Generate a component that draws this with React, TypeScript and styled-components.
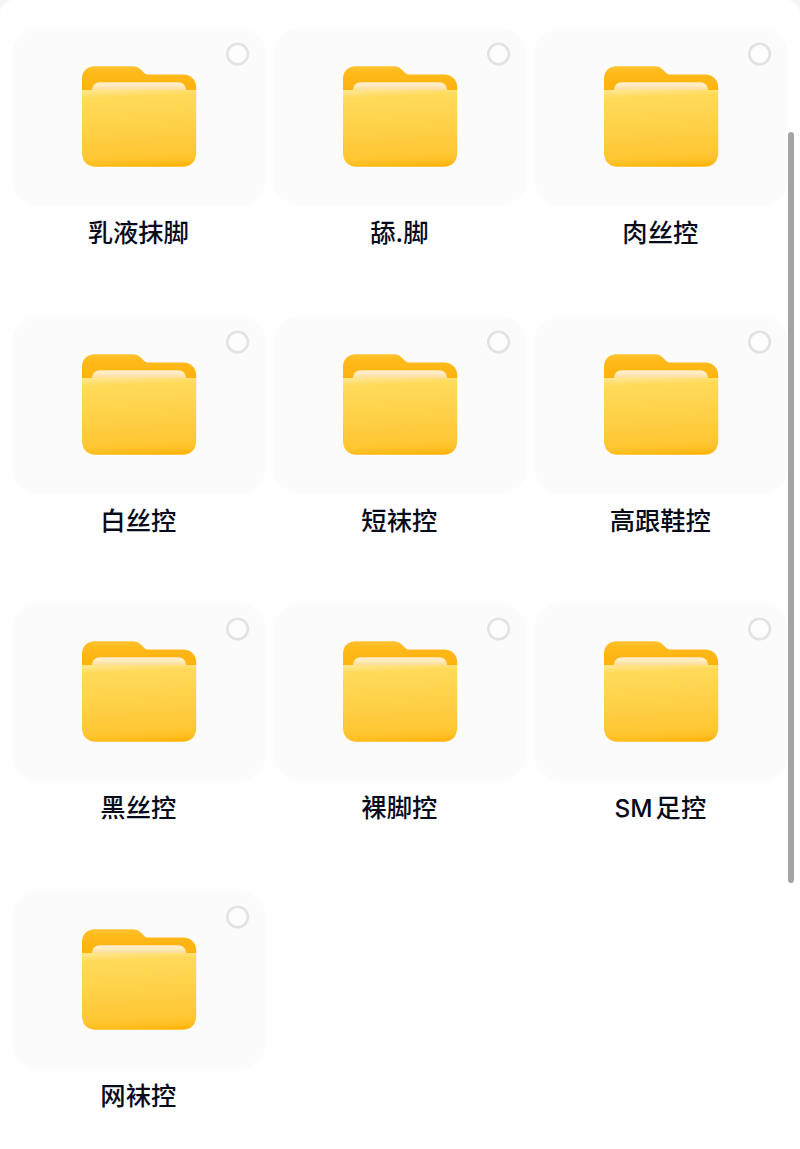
import React from "react";
import styled, { createGlobalStyle } from "styled-components";

const GlobalStyle = createGlobalStyle`
  * { box-sizing: border-box; }
  body { margin: 0; background: #f6f6f7; }
`;

const Sheet = styled.main`
  position: relative;
  width: 800px;
  height: 1149px;
  padding: 28px 12px 0;
  overflow: hidden;
  background: #fefefe;
  border-radius: 14px 14px 0 0;
  font-family: Inter, "Noto Sans CJK SC", sans-serif;
`;

const Grid = styled.div`
  display: grid;
  grid-template-columns: repeat(3, 254px);
  grid-auto-rows: 287.7px;
  column-gap: 7px;
`;

const Item = styled.div`
  display: flex;
  flex-direction: column;
  align-items: center;
`;

const Card = styled.div`
  position: relative;
  display: flex;
  justify-content: center;
  width: 100%;
  height: 178px;
  padding-top: 38px;
  border-radius: 27px;
  background: #fbfbfb;
`;

const Ring = styled.svg`
  position: absolute;
  top: 14px;
  right: 16px;
  width: 24px;
  height: 24px;
`;

const Name = styled.div`
  margin-top: 9px;
  padding-right: 1.4px;
  height: 36px;
  line-height: 36px;
  font-size: 25.3px;
  font-weight: 500;
  word-spacing: -3.6px;
  white-space: nowrap;
  color: #080c1a;
`;

const Latin = styled.span`
  font-size: 24.4px;
`;

const Scrollbar = styled.div`
  position: absolute;
  top: 132px;
  right: 6px;
  width: 6px;
  height: 751px;
  border-radius: 3px;
  background: #a4a4a4;
`;

const Defs = () => (
  <svg width="0" height="0" style={{ position: "absolute" }}>
    <defs>
      <linearGradient id="back" x1="0" y1="0" x2="0" y2="1">
        <stop offset="0" stopColor="#ffc433" />
        <stop offset="0.25" stopColor="#ffba1a" />
        <stop offset="1" stopColor="#ffb20d" />
      </linearGradient>
      <linearGradient id="paper" x1="0" y1="0" x2="0" y2="1">
        <stop offset="0" stopColor="#fff0cc" />
        <stop offset="0.4" stopColor="#ffecbf" />
        <stop offset="1" stopColor="#ffdc94" />
      </linearGradient>
      <linearGradient id="front" x1="0.47" y1="0" x2="0.53" y2="1">
        <stop offset="0" stopColor="#ffe488" />
        <stop offset="0.08" stopColor="#ffda59" />
        <stop offset="0.5" stopColor="#ffd048" />
        <stop offset="0.87" stopColor="#ffc632" />
        <stop offset="0.94" stopColor="#ffbf23" />
        <stop offset="1" stopColor="#ffb40a" />
      </linearGradient>
    </defs>
  </svg>
);

const Folder = () => (
  <svg width="115" height="102" viewBox="0 0 115 102">
    <path
      d="M0 24.3V13C0 5 5 0.2 12.5 0.2H51C54.2 0.2 56.2 1 58.2 3L62 6.7C63.6 8.2 64.8 8.6 67 8.6H101C109 8.6 114.2 14 114.2 21.5V24.3Z"
      fill="url(#back)"
    />
    <path d="M9.8 24.3C10.2 19.4 13 16.3 18 16.3H96C101 16.3 103.8 19.4 104.2 24.3Z" fill="url(#paper)" />
    <path
      d="M0 24H114.2V86.8C114.2 95.5 109 100.8 100.4 100.8H13.8C5.2 100.8 0 95.5 0 86.8Z"
      fill="url(#front)"
    />
  </svg>
);

const Radio = () => (
  <Ring viewBox="0 0 24 24">
    <circle cx="11.6" cy="12" r="10.3" fill="#fdfdfd" stroke="#e3e3e3" strokeWidth="2.6" />
  </Ring>
);

const names: { latin?: string; text: string }[] = [
  { text: "乳液抹脚" },
  { text: "舔.脚" },
  { text: "肉丝控" },
  { text: "白丝控" },
  { text: "短袜控" },
  { text: "高跟鞋控" },
  { text: "黑丝控" },
  { text: "裸脚控" },
  { latin: "SM", text: " 足控" },
  { text: "网袜控" },
];

export default function App() {
  return (
    <>
      <GlobalStyle />
      <Defs />
      <Sheet>
        <Grid>
          {names.map(({ latin, text }) => (
            <Item key={text}>
              <Card>
                <Folder />
                <Radio />
              </Card>
              <Name>
                {latin && <Latin>{latin}</Latin>}
                {text}
              </Name>
            </Item>
          ))}
        </Grid>
        <Scrollbar />
      </Sheet>
    </>
  );
}
